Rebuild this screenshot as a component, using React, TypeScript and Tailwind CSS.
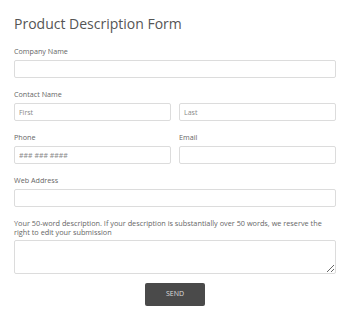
const inputCls =
  'block w-full h-[18px] rounded-[2px] border border-[#dcdcdc] bg-white px-[4px] text-[7px] text-[#555] placeholder:text-[#888] outline-none'

const labelCls = 'block text-[7.2px] leading-[10px] text-[#666]'

export default function App() {
  return (
    <div className="w-[350px] h-[320px] bg-white px-[14px] pt-[14px] font-['Open_Sans',sans-serif]">
      <h1 className="text-[14px] leading-[20px] text-[#555]">Product Description Form</h1>

      <div className="mt-[12px]">
        <label className={labelCls}>Company Name</label>
        <input className={`${inputCls} mt-[4px]`} />
      </div>

      <div className="mt-[11px]">
        <label className={labelCls}>Contact Name</label>
        <div className="mt-[4px] grid grid-cols-2 gap-[8px]">
          <input className={inputCls} placeholder="First" />
          <input className={inputCls} placeholder="Last" />
        </div>
      </div>

      <div className="mt-[11px] grid grid-cols-2 gap-[8px]">
        <div>
          <label className={labelCls}>Phone</label>
          <input className={`${inputCls} mt-[4px]`} placeholder="### ### ####" />
        </div>
        <div>
          <label className={labelCls}>Email</label>
          <input className={`${inputCls} mt-[4px]`} />
        </div>
      </div>

      <div className="mt-[11px]">
        <label className={labelCls}>Web Address</label>
        <input className={`${inputCls} mt-[4px]`} />
      </div>

      <div className="mt-[12px]">
        <label className="block text-[7.3px] leading-[9px] text-[#666]">
          Your 50-word description. If your description is substantially over 50 words, we reserve the right to edit your submission
        </label>
        <textarea className="mt-[3px] block w-full h-[34px] rounded-[2px] border border-[#dcdcdc] bg-white outline-none resize-y" />
      </div>

      <div className="mt-[9px] flex justify-center">
        <button className="w-[60px] h-[23px] rounded-[2px] bg-[#4a4a4a] text-[7px] text-[#ddd]">SEND</button>
      </div>
    </div>
  )
}
